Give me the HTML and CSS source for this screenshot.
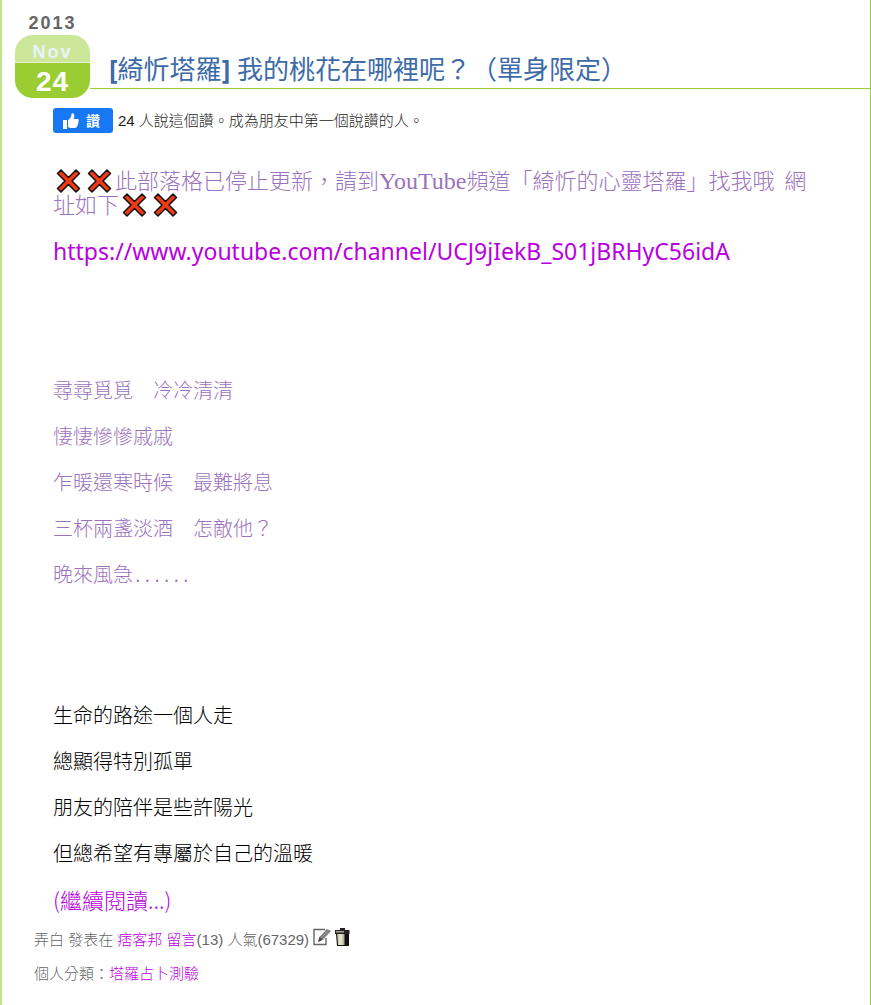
FILE: index.html
```html
<!DOCTYPE html>
<html lang="zh-Hant">
<head>
<meta charset="utf-8">
<meta name="viewport" content="width=device-width, initial-scale=1">
<title>[綺忻塔羅] 我的桃花在哪裡呢？（單身限定）</title>
<link rel="stylesheet" href="styles.css">
</head>
<body>
<svg class="defs" width="0" height="0" aria-hidden="true">
  <symbol id="cross" viewBox="0 0 24 24">
    <path d="M4.500 1 12 8.500 19.500 1 23 4.500 15.500 12 23 19.500 19.500 23 12 15.500 4.500 23 1 19.500 8.500 12 1 4.500Z" fill="#f03a17" stroke="#111" stroke-width="1.500" stroke-linejoin="round"/>
  </symbol>
</svg>
<article class="post">
  <header class="head">
    <time class="date" datetime="2013-11-24">
      <span class="year">2013</span>
      <span class="month">Nov</span>
      <span class="day">24</span>
    </time>
    <h1 class="title"><b>[</b>綺忻塔羅<b>]</b> 我的桃花在哪裡呢？（單身限定）</h1>
  </header>
  <div class="body">
    <div class="like">
      <button class="like-button" type="button">
        <svg width="16" height="16" viewBox="0 0 16 16" aria-hidden="true"><path d="M0 7h4v9H0zM5 7.500 8 4 8.500.8Q9 0 10 .3 11.500 1 11.300 3L10.700 6H15Q16.500 7 15.300 8.500 16 10 14.800 11 15.200 12.500 14 13 14 15 12 15H8Q6.500 15 5 14Z" fill="#fff"/></svg>
        <span>讚</span>
      </button>
      <span>24 人說這個讚。成為朋友中第一個說讚的人。</span>
    </div>
    <p class="notice"><svg class="cross"><use href="#cross"/></svg><svg class="cross"><use href="#cross"/></svg>此部落格已停止更新，請到<span class="latin">YouTube</span>頻道「綺忻的心靈塔羅」找我哦&nbsp; 網址如下<svg class="cross"><use href="#cross"/></svg><svg class="cross"><use href="#cross"/></svg></p>
    <p class="channel"><a href="https://www.youtube.com/channel/UCJ9jIekB_S01jBRHyC56idA">https://www.youtube.com/channel/UCJ9jIekB_S01jBRHyC56idA</a></p>
    <div class="verse quote">
      <p>尋尋覓覓　冷冷清清</p>
      <p>悽悽慘慘戚戚</p>
      <p>乍暖還寒時候　最難將息</p>
      <p>三杯兩盞淡酒　怎敵他？</p>
      <p>晚來風急<span class="dots">......</span></p>
    </div>
    <div class="verse">
      <p>生命的路途一個人走</p>
      <p>總顯得特別孤單</p>
      <p>朋友的陪伴是些許陽光</p>
      <p>但總希望有專屬於自己的溫暖</p>
      <p class="more"><a href="#more">(繼續閱讀...)</a></p>
    </div>
  </div>
  <footer class="foot">
    <div class="meta">
      <span>弄白 發表在 <a href="#home">痞客邦</a> <a href="#comments">留言</a>(13) 人氣(67329)</span>
      <button class="icon" type="button" aria-label="編輯">
        <svg width="18" height="18" viewBox="0 0 18 18"><path d="M12 1.500H1V16.500H13V10" fill="#fff" stroke="#666" stroke-width="1.400"/><path d="M5 14 6.500 9 14 1 18 3 10.500 11.500Z" fill="#777"/><path d="M8 10 15 2.500M10 11 17 3.500" stroke="#bbb" stroke-width="1" stroke-dasharray="2 1"/><path d="M5 14 6.500 9 9.500 11.500Z" fill="#444"/></svg>
      </button>
      <button class="icon" type="button" aria-label="刪除">
        <svg width="15" height="18" viewBox="0 0 15 18"><path d="M5 0h5v2h4.500v4H0V2h5z" fill="#222"/><path d="M1 3h8v1.500H1z" fill="#aaa88f"/><path d="M1 6H14V18H2z" fill="#111"/><path d="M2 6H9.500V17H3z" fill="#b5b299"/><path d="M3.500 6h4v11h-4z" fill="#e5e2cb"/></svg>
      </button>
    </div>
    <div>個人分類：<a href="#category">塔羅占卜測驗</a></div>
  </footer>
</article>
</body>
</html>
```
FILE: styles.css
```css
* { box-sizing: border-box; }
body {
  margin: 0;
  background: #fff;
  color: #666;
  font-family: "Liberation Sans", "Noto Sans CJK TC", sans-serif;
  font-size: 15px;
}
p, h1 { margin: 0; }
a { color: #b900e0; text-decoration: none; }
.defs { display: block; }
.post {
  min-height: 100vh;
  padding-top: 12px;
  border-left: 2px solid #bfe58a;
  border-right: 1px solid #9acd32;
}
.head {
  display: flex;
  align-items: flex-end;
  padding-left: 13px;
}
.date {
  display: flex;
  flex-direction: column;
  flex: none;
  width: 75px;
  text-align: center;
  font-weight: bold;
  letter-spacing: 2px;
}
.year { font-size: 18px; line-height: 23px; }
.month {
  height: 27px;
  border-radius: 18px 18px 0 0;
  background: #cce79a;
  color: #e8f3fb;
  font-size: 18px;
  line-height: 34px;
}
.day {
  height: 36px;
  border-top: 1px solid #e6f3cc;
  border-radius: 0 0 18px 18px;
  background: #9acd32;
  color: #fff;
  font-size: 28px;
  line-height: 38px;
  letter-spacing: 1px;
}
.title {
  flex: 1;
  margin-bottom: 9px;
  padding: 0 0 3px 19px;
  border-bottom: 1px solid #9acd32;
  color: #3d6ba8;
  font-family: "Open Sans", "Noto Sans CJK TC", sans-serif;
  font-size: 26px;
  font-weight: 400;
  line-height: 32px;
}
.body { padding: 10px 50px 0 51px; }
.like {
  display: flex;
  align-items: center;
  gap: 5px;
  color: #1c1e21;
  font-weight: 300;
  line-height: 25px;
}
.like-button {
  display: flex;
  align-items: center;
  gap: 7px;
  height: 25px;
  padding: 0 13px 0 10px;
  border: 0;
  border-radius: 3px;
  background: #1877f2;
  color: #fff;
  font: bold 14px/25px "Noto Sans CJK TC", sans-serif;
}
.notice {
  margin-top: 34px;
  color: #9b72bd;
  font-family: "Noto Sans CJK TC", sans-serif;
  font-size: 22px;
  font-weight: 300;
  line-height: 24px;
}
.latin { font-family: "Liberation Serif", serif; font-size: 24px; line-height: 20px; }
.cross { width: 25px; height: 24px; margin: -3px 3px; vertical-align: -1px; }
.channel {
  margin-top: 21px;
  font-family: "Noto Sans", sans-serif;
  font-size: 23px;
  line-height: 30px;
}
.verse {
  display: grid;
  gap: 24px;
  margin-top: 118px;
  color: #000;
  font-family: "Noto Sans CJK TC", sans-serif;
  font-size: 20px;
  font-weight: 300;
  line-height: 22px;
}
.quote { margin-top: 113px; color: #9b72bd; }
.dots { font-family: "Liberation Mono", monospace; font-size: 16px; line-height: 1; }
.more { font-size: 22px; }
.foot {
  display: grid;
  gap: 10px;
  padding: 18px 32px 0;
  font-weight: 300;
  line-height: 24px;
}
.meta { display: flex; align-items: center; gap: 4px; }
.icon { display: flex; padding: 0 0 6px; border: 0; background: none; }
```
